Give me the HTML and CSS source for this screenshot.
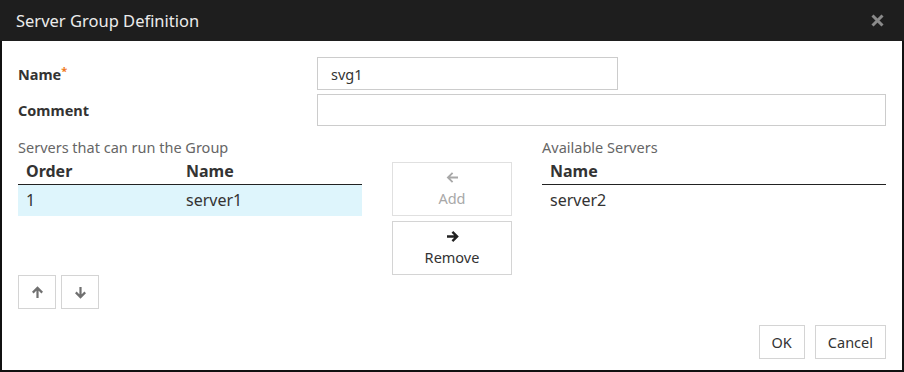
FILE: index.html
```html
<html>
	<head>
		<title>Server Group Definition</title>
		<link rel="stylesheet" href="styles.css">
	</head>
	<body>
		<div class="dialog">
			<div class="titleBar">
				<span class="titleText">Server Group Definition</span>
				<svg class="closeBtn" width="13" height="13" viewBox="0 0 13 13"><path d="M1.5 1.5l10 10M11.5 1.5l-10 10" stroke="#8a8a8a" stroke-width="3"/></svg>
			</div>
			<div class="dialogBody">
				<div class="formRow nameRow">
					<label class="fieldLabel" for="groupName">Name<sup class="req">*</sup></label>
					<input type="text" class="textInput nameInput" id="groupName" value="svg1">
				</div>
				<div class="formRow commentRow">
					<label class="fieldLabel" for="groupComment">Comment</label>
					<input type="text" class="textInput commentInput" id="groupComment">
				</div>

				<div class="serverLists">
					<div class="listPanel">
						<div class="sectionLabel">Servers that can run the Group</div>
						<div class="listBox">
							<table class="listTable">
								<tr><th class="colOrder">Order</th><th>Name</th></tr>
								<tr class="selected"><td class="colOrder">1</td><td>server1</td></tr>
							</table>
						</div>
						<div class="orderBtns">
							<button class="iconBtn">
								<svg width="13" height="13" viewBox="0 0 13 13"><path d="M6.5 12V2.2M1.8 6.6l4.7-4.7 4.7 4.7" fill="none" stroke="#707070" stroke-width="2.2"/></svg>
							</button>
							<button class="iconBtn">
								<svg width="13" height="13" viewBox="0 0 13 13"><path d="M6.5 1v9.8M1.8 6.4l4.7 4.7 4.7-4.7" fill="none" stroke="#707070" stroke-width="2.2"/></svg>
							</button>
						</div>
					</div>

					<div class="moveBtns">
						<button class="moveBtn disabled">
							<svg width="13" height="13" viewBox="0 0 13 13"><path d="M12 6.5H2.2M6.6 1.8L1.9 6.5l4.7 4.7" fill="none" stroke="#a8a8a8" stroke-width="1.8"/></svg>
							<span>Add</span>
						</button>
						<button class="moveBtn">
							<svg width="13" height="13" viewBox="0 0 13 13"><path d="M1 6.5h9.8M6.4 1.8l4.7 4.7-4.7 4.7" fill="none" stroke="#222" stroke-width="2.4"/></svg>
							<span>Remove</span>
						</button>
					</div>

					<div class="listPanel">
						<div class="sectionLabel">Available Servers</div>
						<div class="listBox">
							<table class="listTable">
								<tr><th>Name</th></tr>
								<tr><td>server2</td></tr>
							</table>
						</div>
					</div>
				</div>

				<div class="footer">
					<button class="btn">OK</button>
					<button class="btn">Cancel</button>
				</div>
			</div>
		</div>
	</body>
</html>
```

FILE: styles.css
```css
body {
	margin: 0;
	font-family: "Noto Sans", "DejaVu Sans", sans-serif;
	font-size: 14.5px;
	color: #333;
	background: #fff;
}

.dialog {
	width: 904px;
	height: 372px;
	box-sizing: border-box;
	border: 2px solid #111;
	border-top: 0;
	display: flex;
	flex-direction: column;
}

.titleBar {
	height: 41px;
	background-color: #1e1e1e;
	display: flex;
	align-items: center;
	justify-content: space-between;
	padding: 0 16px;
	margin: 0 -2px;
}

.titleText {
	color: #ececec;
	font-size: 16.5px;
}

.closeBtn {
	margin-right: 4px;
}

.dialogBody {
	flex: 1;
	padding: 16px 16px 0 16px;
	display: flex;
	flex-direction: column;
}

.formRow {
	display: flex;
	align-items: center;
}

.commentRow {
	margin-top: 4px;
}

.fieldLabel {
	width: 299px;
	font-weight: bold;
	color: #333;
}

.req {
	color: #f07820;
	font-size: 11px;
	vertical-align: 5px;
	line-height: 0;
}

.textInput {
	box-sizing: border-box;
	border: 1px solid #ccc;
	font-family: inherit;
	font-size: 14.5px;
	color: #333;
	padding: 0 13px;
	margin: 0;
	outline: none;
}

.nameInput {
	width: 301px;
	height: 33px;
}

.commentInput {
	width: 569px;
	height: 32px;
}

.serverLists {
	display: flex;
	margin-top: 11px;
}

.listPanel {
	width: 344px;
}

.sectionLabel {
	color: #666;
	height: 21px;
	line-height: 21px;
}

.listBox {
	height: 107px;
}

.listTable {
	width: 100%;
	border-collapse: collapse;
}

.listTable th {
	text-align: left;
	font-weight: bold;
	height: 26px;
	padding: 0 8px;
	border-bottom: 1px solid #222;
}

.listTable td {
	height: 32px;
	padding: 0 8px;
}

.listTable .colOrder {
	width: 144px;
}

.listTable tr.selected td {
	background-color: #def5fc;
}

.orderBtns {
	display: flex;
	gap: 5px;
	margin-top: 10px;
}

button {
	font-family: inherit;
	font-size: 14.5px;
	color: #333;
	background: #fff;
	border: 1px solid #d4d4d4;
	margin: 0;
	padding: 0;
	cursor: pointer;
}

.iconBtn {
	width: 38px;
	height: 34px;
	display: flex;
	align-items: center;
	justify-content: center;
}

.moveBtns {
	width: 120px;
	margin: 25px 30px 0 30px;
	display: flex;
	flex-direction: column;
	gap: 5px;
}

.moveBtn {
	height: 54px;
	display: flex;
	flex-direction: column;
	align-items: center;
	justify-content: center;
	gap: 4px;
}

.moveBtn.disabled {
	color: #a8a8a8;
	border-color: #e0e0e0;
}

.footer {
	display: flex;
	justify-content: flex-end;
	gap: 10px;
	margin-top: auto;
	margin-bottom: 11px;
}

.btn {
	height: 34px;
	padding: 0 12px;
	min-width: 46px;
}
```
